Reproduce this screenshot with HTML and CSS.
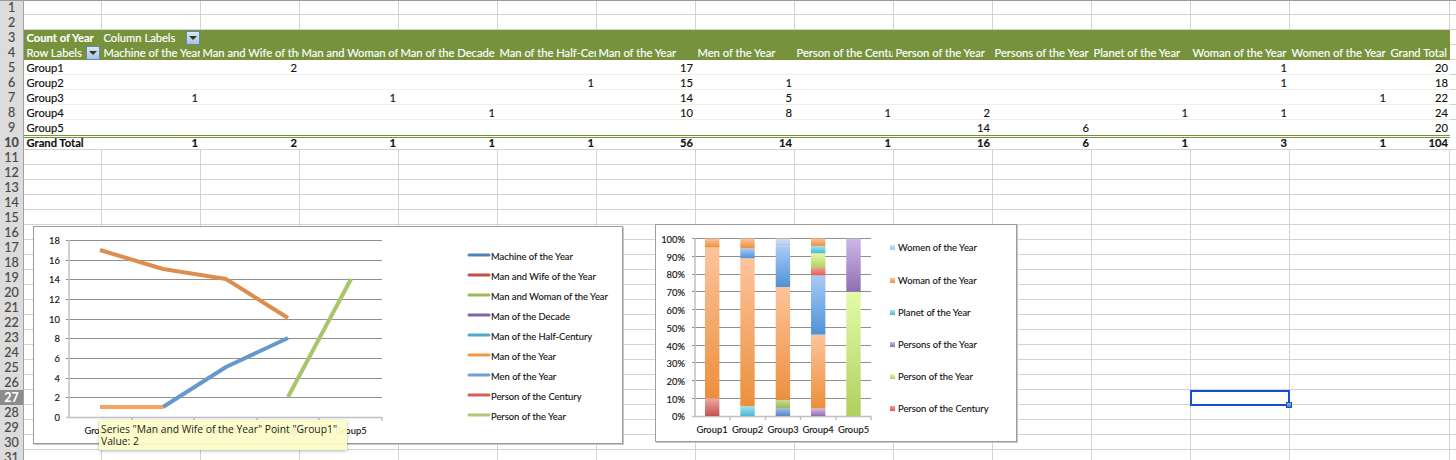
FILE: index.html
```html
<!DOCTYPE html>
<html lang="en">
<head>
  <meta charset="UTF-8" />
  <title>Pivot table</title>
  <link rel="stylesheet" href="styles.css">
</head>
<body>
  <div id="sheet">
    <div class="row"><div class="rowHead">1</div></div>
    <div class="row"><div class="rowHead">2</div></div>

    <div class="row pivotHead">
      <div class="rowHead">3</div>
      <div class="cell bold">Count of Year</div>
      <div class="cell wide">Column Labels <span class="filter"></span></div>
    </div>
    <div class="row pivotHead">
      <div class="rowHead">4</div>
      <div class="cell">Row Labels <span class="filter rowFilter"></span></div>
      <div class="cell">Machine of the Year</div>
      <div class="cell">Man and Wife of the Year</div>
      <div class="cell">Man and Woman of the Year</div>
      <div class="cell">Man of the Decade</div>
      <div class="cell">Man of the Half-Century</div>
      <div class="cell">Man of the Year</div>
      <div class="cell">Men of the Year</div>
      <div class="cell">Person of the Century</div>
      <div class="cell">Person of the Year</div>
      <div class="cell">Persons of the Year</div>
      <div class="cell">Planet of the Year</div>
      <div class="cell">Woman of the Year</div>
      <div class="cell">Women of the Year</div>
      <div class="cell">Grand Total</div>
    </div>

    <div class="row pivot">
      <div class="rowHead">5</div><div class="cell">Group1</div>
      <div class="cell"></div><div class="cell num">2</div><div class="cell"></div><div class="cell"></div><div class="cell"></div>
      <div class="cell num">17</div><div class="cell"></div><div class="cell"></div><div class="cell"></div><div class="cell"></div>
      <div class="cell"></div><div class="cell num">1</div><div class="cell"></div><div class="cell num">20</div>
    </div>
    <div class="row pivot">
      <div class="rowHead">6</div><div class="cell">Group2</div>
      <div class="cell"></div><div class="cell"></div><div class="cell"></div><div class="cell"></div><div class="cell num">1</div>
      <div class="cell num">15</div><div class="cell num">1</div><div class="cell"></div><div class="cell"></div><div class="cell"></div>
      <div class="cell"></div><div class="cell num">1</div><div class="cell"></div><div class="cell num">18</div>
    </div>
    <div class="row pivot">
      <div class="rowHead">7</div><div class="cell">Group3</div>
      <div class="cell num">1</div><div class="cell"></div><div class="cell num">1</div><div class="cell"></div><div class="cell"></div>
      <div class="cell num">14</div><div class="cell num">5</div><div class="cell"></div><div class="cell"></div><div class="cell"></div>
      <div class="cell"></div><div class="cell"></div><div class="cell num">1</div><div class="cell num">22</div>
    </div>
    <div class="row pivot">
      <div class="rowHead">8</div><div class="cell">Group4</div>
      <div class="cell"></div><div class="cell"></div><div class="cell"></div><div class="cell num">1</div><div class="cell"></div>
      <div class="cell num">10</div><div class="cell num">8</div><div class="cell num">1</div><div class="cell num">2</div><div class="cell"></div>
      <div class="cell num">1</div><div class="cell num">1</div><div class="cell"></div><div class="cell num">24</div>
    </div>
    <div class="row pivot lastGroup">
      <div class="rowHead">9</div><div class="cell">Group5</div>
      <div class="cell"></div><div class="cell"></div><div class="cell"></div><div class="cell"></div><div class="cell"></div>
      <div class="cell"></div><div class="cell"></div><div class="cell"></div><div class="cell num">14</div><div class="cell num">6</div>
      <div class="cell"></div><div class="cell"></div><div class="cell"></div><div class="cell num">20</div>
    </div>
    <div class="row pivot total">
      <div class="rowHead">10</div><div class="cell">Grand Total</div>
      <div class="cell num">1</div><div class="cell num">2</div><div class="cell num">1</div><div class="cell num">1</div><div class="cell num">1</div>
      <div class="cell num">56</div><div class="cell num">14</div><div class="cell num">1</div><div class="cell num">16</div><div class="cell num">6</div>
      <div class="cell num">1</div><div class="cell num">3</div><div class="cell num">1</div><div class="cell num">104</div>
    </div>

    <div class="row"><div class="rowHead">11</div></div>
    <div class="row"><div class="rowHead">12</div></div>
    <div class="row"><div class="rowHead">13</div></div>
    <div class="row"><div class="rowHead">14</div></div>
    <div class="row"><div class="rowHead">15</div></div>
    <div class="row"><div class="rowHead">16</div></div>
    <div class="row"><div class="rowHead">17</div></div>
    <div class="row"><div class="rowHead">18</div></div>
    <div class="row"><div class="rowHead">19</div></div>
    <div class="row"><div class="rowHead">20</div></div>
    <div class="row"><div class="rowHead">21</div></div>
    <div class="row"><div class="rowHead">22</div></div>
    <div class="row"><div class="rowHead">23</div></div>
    <div class="row"><div class="rowHead">24</div></div>
    <div class="row"><div class="rowHead">25</div></div>
    <div class="row"><div class="rowHead">26</div></div>
    <div class="row"><div class="rowHead current">27</div></div>
    <div class="row"><div class="rowHead">28</div></div>
    <div class="row"><div class="rowHead">29</div></div>
    <div class="row"><div class="rowHead">30</div></div>
    <div class="row"><div class="rowHead">31</div></div>

    <!-- line chart -->
    <svg id="lineChart" class="chart" width="588" height="216" viewBox="34 227 588 216">
      <g class="grid">
        <path d="M66 240H382M66 260H382M66 279H382M66 299H382M66 319H382M66 338H382M66 358H382M66 378H382M66 397H382"/>
      </g>
      <g class="axis">
        <path d="M69 240V418M66 417.5H382M132 417V421M194 417V421M257 417V421M319 417V421M382 417V421"/>
      </g>
      <g class="axisText" text-anchor="end">
        <text x="60" y="244">18</text><text x="60" y="264">16</text><text x="60" y="283">14</text>
        <text x="60" y="303">12</text><text x="60" y="323">10</text><text x="60" y="342">8</text>
        <text x="60" y="362">6</text><text x="60" y="382">4</text><text x="60" y="401">2</text>
        <text x="60" y="421">0</text>
      </g>
      <g class="axisText" text-anchor="middle">
        <text x="100" y="434">Group1</text><text x="163" y="434">Group2</text><text x="226" y="434">Group3</text>
        <text x="288" y="434">Group4</text><text x="351" y="434">Group5</text>
      </g>
      <g class="series">
        <polyline stroke="#dd8e4f" points="100,250 163,269 226,279 288,318"/>
        <polyline stroke="#6599cd" points="163,407 226,367 288,338"/>
        <polyline stroke="#fba15c" points="100,407 163,407"/>
        <polyline stroke="#a9c56b" points="288,397 351,279"/>
      </g>
      <g class="legendLines">
        <path stroke="#4f81bd" d="M469 255H489"/>
        <path stroke="#c0504d" d="M469 275H489"/>
        <path stroke="#9bbb59" d="M469 295H489"/>
        <path stroke="#8064a2" d="M469 315H489"/>
        <path stroke="#4bacc6" d="M469 335H489"/>
        <path stroke="#f79646" d="M469 355H489"/>
        <path stroke="#6fa1d9" d="M469 375H489"/>
        <path stroke="#d2605c" d="M469 395H489"/>
        <path stroke="#afc976" d="M469 415H489"/>
      </g>
      <g class="axisText">
        <text x="491" y="260">Machine of the Year</text>
        <text x="491" y="280">Man and Wife of the Year</text>
        <text x="491" y="300">Man and Woman of the Year</text>
        <text x="491" y="320">Man of the Decade</text>
        <text x="491" y="340">Man of the Half-Century</text>
        <text x="491" y="360">Man of the Year</text>
        <text x="491" y="380">Men of the Year</text>
        <text x="491" y="400">Person of the Century</text>
        <text x="491" y="420">Person of the Year</text>
      </g>
    </svg>

    <!-- stacked chart -->
    <svg id="stackChart" class="chart" width="360" height="216" viewBox="656 225 360 216">
      <defs>
        <linearGradient id="gOrange" x1="0" y1="0" x2="0" y2="1"><stop offset="0" stop-color="#fdc49c"/><stop offset="1" stop-color="#ec8f3c"/></linearGradient>
        <linearGradient id="gBlue" x1="0" y1="0" x2="0" y2="1"><stop offset="0" stop-color="#a8caf6"/><stop offset="1" stop-color="#5092d8"/></linearGradient>
        <linearGradient id="gSteel" x1="0" y1="0" x2="0" y2="1"><stop offset="0" stop-color="#a3bfe6"/><stop offset="1" stop-color="#5a86c0"/></linearGradient>
        <linearGradient id="gPale" x1="0" y1="0" x2="0" y2="1"><stop offset="0" stop-color="#d2dff2"/><stop offset="1" stop-color="#b0c6e6"/></linearGradient>
        <linearGradient id="gGreen" x1="0" y1="0" x2="0" y2="1"><stop offset="0" stop-color="#e3fbaa"/><stop offset="1" stop-color="#aed05e"/></linearGradient>
        <linearGradient id="gOlive" x1="0" y1="0" x2="0" y2="1"><stop offset="0" stop-color="#c6dc92"/><stop offset="1" stop-color="#9bbb59"/></linearGradient>
        <linearGradient id="gPurple" x1="0" y1="0" x2="0" y2="1"><stop offset="0" stop-color="#cdb8e8"/><stop offset="1" stop-color="#8f6eb4"/></linearGradient>
        <linearGradient id="gRed" x1="0" y1="0" x2="0" y2="1"><stop offset="0" stop-color="#eeaaa8"/><stop offset="1" stop-color="#c4504e"/></linearGradient>
        <linearGradient id="gBright" x1="0" y1="0" x2="0" y2="1"><stop offset="0" stop-color="#f49a98"/><stop offset="1" stop-color="#e05a58"/></linearGradient>
        <linearGradient id="gTeal" x1="0" y1="0" x2="0" y2="1"><stop offset="0" stop-color="#9fe4f2"/><stop offset="1" stop-color="#4fb6d2"/></linearGradient>
      </defs>
      <g class="grid">
        <path d="M692 238.5H871M692 256.3H871M692 274H871M692 291.8H871M692 309.5H871M692 327.3H871M692 345H871M692 362.8H871M692 380.5H871M692 398.3H871"/>
      </g>
      <g class="axis">
        <path d="M695 238V417M692 416.5H871M730 416V420M765.5 416V420M800.5 416V420M836 416V420M871 416V420"/>
      </g>
      <g class="bars">
        <rect x="705" y="398.3" width="14.4" height="17.7" fill="url(#gRed)"/>
        <rect x="705" y="247.4" width="14.4" height="150.9" fill="url(#gOrange)"/>
        <rect x="705" y="238.5" width="14.4" height="8.9" fill="url(#gOrange)"/>

        <rect x="740.3" y="406.1" width="14.4" height="9.9" fill="url(#gTeal)"/>
        <rect x="740.3" y="258.2" width="14.4" height="147.9" fill="url(#gOrange)"/>
        <rect x="740.3" y="248.4" width="14.4" height="9.8" fill="url(#gBlue)"/>
        <rect x="740.3" y="238.5" width="14.4" height="9.9" fill="url(#gOrange)"/>

        <rect x="775.7" y="408" width="14.4" height="8" fill="url(#gSteel)"/>
        <rect x="775.7" y="400" width="14.4" height="8" fill="url(#gOlive)"/>
        <rect x="775.7" y="287" width="14.4" height="113" fill="url(#gOrange)"/>
        <rect x="775.7" y="246.5" width="14.4" height="40.5" fill="url(#gBlue)"/>
        <rect x="775.7" y="238.5" width="14.4" height="8" fill="url(#gPale)"/>

        <rect x="811" y="408.6" width="14.4" height="7.4" fill="url(#gPurple)"/>
        <rect x="811" y="334.6" width="14.4" height="74" fill="url(#gOrange)"/>
        <rect x="811" y="275.4" width="14.4" height="59.2" fill="url(#gBlue)"/>
        <rect x="811" y="268" width="14.4" height="7.4" fill="url(#gBright)"/>
        <rect x="811" y="253.3" width="14.4" height="14.7" fill="url(#gGreen)"/>
        <rect x="811" y="245.9" width="14.4" height="7.4" fill="url(#gTeal)"/>
        <rect x="811" y="238.5" width="14.4" height="7.4" fill="url(#gOrange)"/>

        <rect x="846.3" y="291.8" width="14.4" height="124.2" fill="url(#gGreen)"/>
        <rect x="846.3" y="238.5" width="14.4" height="53.3" fill="url(#gPurple)"/>
      </g>
      <g class="axisText" text-anchor="end">
        <text x="685" y="243">100%</text><text x="685" y="261">90%</text><text x="685" y="278">80%</text>
        <text x="685" y="296">70%</text><text x="685" y="314">60%</text><text x="685" y="332">50%</text>
        <text x="685" y="350">40%</text><text x="685" y="367">30%</text><text x="685" y="385">20%</text>
        <text x="685" y="403">10%</text><text x="685" y="420">0%</text>
      </g>
      <g class="axisText" text-anchor="middle">
        <text x="712" y="433">Group1</text><text x="747.5" y="433">Group2</text><text x="783" y="433">Group3</text>
        <text x="818" y="433">Group4</text><text x="853.5" y="433">Group5</text>
      </g>
      <g>
        <rect x="890" y="245" width="5" height="5" fill="url(#gPale)"/>
        <rect x="890" y="278" width="5" height="5" fill="url(#gOrange)"/>
        <rect x="890" y="310" width="5" height="5" fill="url(#gTeal)"/>
        <rect x="890" y="342" width="5" height="5" fill="url(#gPurple)"/>
        <rect x="890" y="374" width="5" height="5" fill="url(#gGreen)"/>
        <rect x="890" y="406" width="5" height="5" fill="url(#gBright)"/>
      </g>
      <g class="axisText">
        <text x="898" y="251">Women of the Year</text>
        <text x="898" y="284">Woman of the Year</text>
        <text x="898" y="316">Planet of the Year</text>
        <text x="898" y="348">Persons of the Year</text>
        <text x="898" y="380">Person of the Year</text>
        <text x="898" y="412">Person of the Century</text>
      </g>
    </svg>

    <div id="tooltip">Series "Man and Wife of the Year" Point "Group1"<br>Value: 2</div>
    <div id="selected"></div>
  </div>
</body>
</html>
```

FILE: styles.css
```css
body {
  margin: 0;
  background: white;
  overflow: hidden;
  font-family: Lato, "Liberation Sans", sans-serif;
  font-size: 11.2px;
  color: #111;
}
#sheet {
  position: relative;
  width: 1456px;
  height: 460px;
  overflow: hidden;
}
.row {
  --line: linear-gradient(#d2d2d2, #d2d2d2);
  display: grid;
  grid-template-columns: 24px 77px repeat(13, 99px) 62px;
  height: 15px;
  line-height: 15px;
  background:
    var(--line) 0 100% / 100% 1px no-repeat,
    var(--line) 1449px 0 / 1px 100% no-repeat,
    repeating-linear-gradient(to right, #d2d2d2 0 1px, transparent 1px 99px) 101px 0 / 1287px 100% no-repeat;
}
.row:first-child {
  box-shadow: inset 0 1px 0 #9a9a9a;
}
.rowHead {
  grid-column: 1;
  background: #dcdcdc;
  border-right: 1px solid #a0a0a0;
  border-bottom: 1px solid #a8a8a8;
  box-sizing: border-box;
  text-align: center;
  font-size: 12.5px;
  color: #4a4a4a;
  line-height: 15px;
  -webkit-text-stroke: 0.2px #4a4a4a;
}
.row:first-child .rowHead {
  box-shadow: inset 0 1px 0 #9a9a9a;
}
.rowHead.current {
  background: #8c8c8c;
  color: white;
  font-weight: bold;
  -webkit-text-stroke: 0;
}
.cell {
  padding: 0 2px 0 2.5px;
  white-space: nowrap;
  overflow: hidden;
  position: relative;
  -webkit-text-stroke: 0.15px;
}
.num { text-align: right; }
.bold { font-weight: bold; }
.wide { grid-column: span 2; }
.pivotHead {
  background:
    linear-gradient(#76923c, #76923c) 0 0 / 1450px 100% no-repeat,
    var(--line) 0 100% / 100% 1px no-repeat;
  color: white;
}
.pivot {
  background:
    linear-gradient(#eef2e2, #eef2e2) 0 100% / 1450px 1px no-repeat,
    linear-gradient(white, white) 0 0 / 1450px 100% no-repeat,
    var(--line) 0 100% / 100% 1px no-repeat;
}
.lastGroup {
  background: white;
}
.total {
  font-weight: bold;
  background:
    linear-gradient(#76923c, #76923c) 0 0 / 1450px 1px no-repeat,
    linear-gradient(#76923c, #76923c) 0 2px / 1450px 1px no-repeat,
    var(--line) 0 100% / 100% 1px no-repeat;
}
.filter {
  position: absolute;
  left: 85px;
  top: 1px;
  width: 14px;
  height: 14px;
  box-sizing: border-box;
  background: linear-gradient(#dbe6f1, #a9c4de);
  border: 1px solid #5d8aa8;
}
.rowFilter { left: 62px; }
.filter::after {
  content: "";
  position: absolute;
  left: 2px;
  top: 4px;
  border: 4px solid transparent;
  border-top: 4px solid #333;
  border-bottom: 0;
}
.chart {
  position: absolute;
  background: white;
  box-shadow: 0 0 0 1px #9c9c9c, 1px 1px 0 1px #c8c8c8;
}
#lineChart { left: 34px; top: 227px; }
#stackChart { left: 656px; top: 225px; }
.chart text {
  font-family: Lato, sans-serif;
  font-size: 9.4px;
  fill: #111;
  stroke: #111;
  stroke-width: 0.12;
}
.grid path {
  fill: none;
  stroke: #8f8f8f;
  stroke-width: 1;
  shape-rendering: crispEdges;
}
.axis path {
  fill: none;
  stroke: #c0c0c0;
  stroke-width: 1.5;
}
.series polyline {
  fill: none;
  stroke-width: 4;
  stroke-linejoin: round;
}
.legendLines path {
  fill: none;
  stroke-width: 3;
  stroke-linecap: round;
}
#tooltip {
  position: absolute;
  left: 99px;
  top: 420px;
  width: 248px;
  height: 30px;
  box-sizing: border-box;
  padding: 3px 2px 0;
  background: rgba(253, 253, 200, 0.92);
  box-shadow: 0 1px 3px rgba(0, 0, 0, 0.3);
  font-family: "Open Sans", sans-serif;
  font-size: 10.3px;
  line-height: 12px;
  color: #222;
}
#selected {
  position: absolute;
  left: 1190px;
  top: 390px;
  width: 100px;
  height: 16px;
  box-sizing: border-box;
  border: 2px solid #1450c8;
}
#selected::after {
  content: "";
  position: absolute;
  right: -4px;
  bottom: -4px;
  width: 6px;
  height: 6px;
  background: linear-gradient(#8fb4ec, #3f78d8);
  border: 1px solid #1450c8;
  box-sizing: border-box;
}
```
